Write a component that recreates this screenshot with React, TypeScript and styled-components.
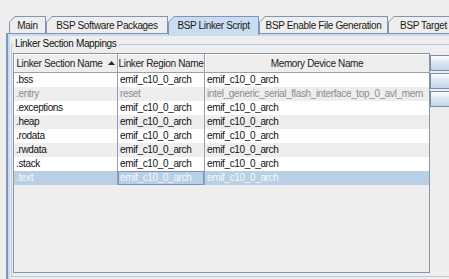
import styled, { createGlobalStyle } from "styled-components";

const GlobalStyle = createGlobalStyle`
  html, body {
    margin: 0;
    padding: 0;
    background: #eeeeee;
  }
  body {
    font-family: "Liberation Sans", Arial, sans-serif;
    font-size: 10px;
    letter-spacing: -0.35px;
    color: #1a1a1a;
  }
`;

const Page = styled.div`
  width: 449px;
  height: 279px;
  overflow: hidden;
  padding-top: 16px;
  box-sizing: border-box;
`;

const TabStrip = styled.div`
  display: flex;
  align-items: flex-start;
  height: 17px;
  padding-left: 9px;
  position: relative;
  z-index: 1;
`;

const Tab = styled.div<{ $active?: boolean; $w: number }>`
  flex: none;
  width: ${(p) => p.$w}px;
  height: ${(p) => (p.$active ? 19 : 17)}px;
  padding: 1px 1px 0 1px;
  box-sizing: border-box;
  background: #8094b3;
  clip-path: polygon(0 6px, 6px 0, 100% 0, 100% 100%, 0 100%);
`;

const TabFace = styled.div<{ $active?: boolean }>`
  height: 100%;
  background: ${(p) => (p.$active ? "#cadcf1" : "#eeeeee")};
  clip-path: polygon(0 5px, 5px 0, 100% 0, 100% 100%, 0 100%);
  display: flex;
  justify-content: center;
  padding-bottom: ${(p) => (p.$active ? 2 : 0)}px;
  box-sizing: border-box;
  align-items: center;
  white-space: nowrap;
  overflow: hidden;
`;

const Panel = styled.div`
  margin-left: 6px;
  height: 246px;
  box-sizing: border-box;
  border-top: 1px solid #8094b3;
  border-left: 2px solid #7f97bd;
  box-shadow: inset 2px 2px 0 #c8daee;
  padding: 10px 0 0 3px;
`;

const Group = styled.div`
  position: relative;
  width: 520px;
  height: 233px;
  box-sizing: border-box;
  border: 1px solid #b8cbe2;
  padding: 8px 0 3px 1px;
  display: flex;
  align-items: flex-start;
`;

const GroupTitle = styled.div`
  position: absolute;
  top: -7px;
  left: 1px;
  padding: 0 2px;
  line-height: 12px;
  background: #eeeeee;
  color: #111;
`;

const ScrollPane = styled.div`
  flex: none;
  width: 417px;
  height: 220px;
  box-sizing: border-box;
  border: 1px solid #8a95a6;
  background: #eeeeee;
  overflow: hidden;
`;

const columns = "104px 87px 224px";

const HeaderRow = styled.div`
  display: grid;
  grid-template-columns: ${columns};
  height: 19px;
`;

const HeaderCell = styled.div`
  display: flex;
  align-items: center;
  justify-content: center;
  gap: 5px;
  border-right: 1px solid #9aa0aa;
  border-bottom: 1px solid #9aa0aa;
  box-shadow: inset 1px 1px 0 #ffffff;
  background: #eeeeee;
  white-space: nowrap;
  overflow: hidden;
  color: #222;

  &:last-child {
    border-right: none;
  }
`;

type RowKind = "plain" | "stripe" | "selected";

const Row = styled.div<{ $kind: RowKind; $disabled?: boolean }>`
  display: grid;
  grid-template-columns: ${columns};
  height: 14px;
  line-height: 14px;
  background: ${(p) =>
    p.$kind === "selected" ? "#b8cfe5" : p.$kind === "stripe" ? "#eeeeee" : "#ffffff"};
  color: ${(p) =>
    p.$kind === "selected" ? "#f6f9fc" : p.$disabled ? "#8c8c8c" : "#111111"};
`;

const Cell = styled.div<{ $focus?: boolean }>`
  padding: 0 2px;
  white-space: nowrap;
  overflow: hidden;
  border-right: 1px solid #8aa0c4;
  box-shadow: ${(p) => (p.$focus ? "inset 0 0 0 1px #7d95bd" : "none")};

  &:last-child {
    border-right: none;
  }
`;

const ButtonColumn = styled.div`
  display: flex;
  flex-direction: column;
  gap: 2px;
  padding-top: 2px;
`;

const SideButton = styled.div`
  width: 40px;
  height: 16px;
  box-sizing: border-box;
  border: 1px solid #7a8aa8;
  background: linear-gradient(#ffffff 0%, #dce7f3 45%, #c3d5ea 100%);
`;

function SortArrow() {
  return (
    <svg width="7" height="4" viewBox="0 0 7 4">
      <polygon points="0,4 3.5,0 7,4" fill="#2a2a2a" />
    </svg>
  );
}

const tabs = [
  { label: "Main", w: 37 },
  { label: "BSP Software Packages", w: 122 },
  { label: "BSP Linker Script", w: 91, active: true },
  { label: "BSP Enable File Generation", w: 129 },
  { label: "BSP Target Features", w: 110 },
];

interface ISection {
  name: string;
  region: string;
  device: string;
  disabled?: boolean;
}

const sections: ISection[] = [
  { name: ".bss", region: "emif_c10_0_arch", device: "emif_c10_0_arch" },
  {
    name: ".entry",
    region: "reset",
    device: "intel_generic_serial_flash_interface_top_0_avl_mem",
    disabled: true,
  },
  { name: ".exceptions", region: "emif_c10_0_arch", device: "emif_c10_0_arch" },
  { name: ".heap", region: "emif_c10_0_arch", device: "emif_c10_0_arch" },
  { name: ".rodata", region: "emif_c10_0_arch", device: "emif_c10_0_arch" },
  { name: ".rwdata", region: "emif_c10_0_arch", device: "emif_c10_0_arch" },
  { name: ".stack", region: "emif_c10_0_arch", device: "emif_c10_0_arch" },
  { name: ".text", region: "emif_c10_0_arch", device: "emif_c10_0_arch" },
];

const selectedIndex = 7;

export default function App() {
  return (
    <Page>
      <GlobalStyle />
      <TabStrip>
        {tabs.map((t) => (
          <Tab key={t.label} $w={t.w} $active={t.active}>
            <TabFace $active={t.active}>{t.label}</TabFace>
          </Tab>
        ))}
      </TabStrip>
      <Panel>
        <Group>
          <GroupTitle>Linker Section Mappings</GroupTitle>
          <ScrollPane>
            <HeaderRow>
              <HeaderCell>
                Linker Section Name <SortArrow />
              </HeaderCell>
              <HeaderCell>Linker Region Name</HeaderCell>
              <HeaderCell>Memory Device Name</HeaderCell>
            </HeaderRow>
            {sections.map((s, i) => {
              const kind: RowKind =
                i === selectedIndex ? "selected" : i % 2 === 1 ? "stripe" : "plain";
              return (
                <Row key={s.name} $kind={kind} $disabled={s.disabled}>
                  <Cell>{s.name}</Cell>
                  <Cell $focus={i === selectedIndex}>{s.region}</Cell>
                  <Cell>{s.device}</Cell>
                </Row>
              );
            })}
          </ScrollPane>
          <ButtonColumn>
            <SideButton />
            <SideButton />
            <SideButton />
          </ButtonColumn>
        </Group>
      </Panel>
    </Page>
  );
}
